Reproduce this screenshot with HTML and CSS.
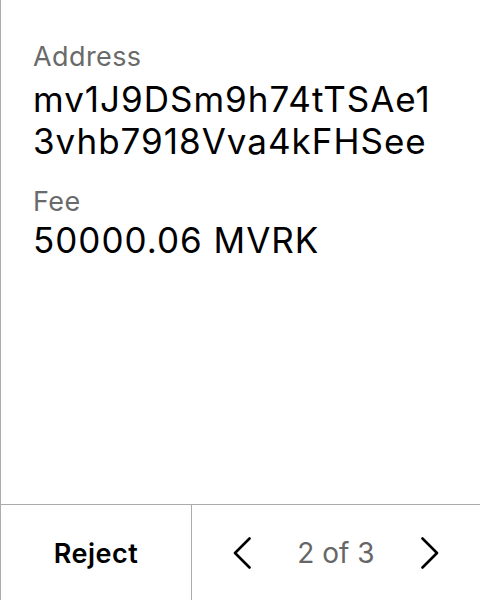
FILE: index.html
```html
<!DOCTYPE html>
<html>
<head>
<meta charset="utf-8">
<link rel="stylesheet" href="styles.css">
</head>
<body>
<div class="screen">
  <div class="content">
    <div class="field">
      <div class="label">Address</div>
      <div class="value">mv1J9DSm9h74tTSAe1<br>3vhb7918Vva4kFHSee</div>
    </div>
    <div class="field field-fee">
      <div class="label">Fee</div>
      <div class="value">50000.06 MVRK</div>
    </div>
  </div>
  <div class="footer">
    <div class="reject">Reject</div>
    <div class="pager">
      <svg class="chev" width="18" height="32" viewBox="0 0 18 32"><path d="M16.5 1.5 L2 16 L16.5 30.5" fill="none" stroke="#000" stroke-width="2.6" stroke-linecap="round" stroke-linejoin="round"/></svg>
      <span class="count">2 of 3</span>
      <svg class="chev" width="18" height="32" viewBox="0 0 18 32"><path d="M1.5 1.5 L16 16 L1.5 30.5" fill="none" stroke="#000" stroke-width="2.6" stroke-linecap="round" stroke-linejoin="round"/></svg>
    </div>
  </div>
</div>
</body>
</html>
```
FILE: styles.css
```css
html, body {
  margin: 0;
  padding: 0;
  background: #fff;
}
body {
  font-family: Inter, "Noto Sans", sans-serif;
  color: #000;
}
.screen {
  width: 479px;
  height: 600px;
  border-left: 1px solid #ababab;
  display: flex;
  flex-direction: column;
}
.content {
  flex: 1;
  padding: 41px 0 0 32px;
}
.label {
  font-size: 27px;
  line-height: 32px;
  letter-spacing: 0.4px;
  color: #6a6a6a;
}
.value {
  font-size: 35px;
  line-height: 42px;
  margin-top: 5px;
  letter-spacing: 1px;
}
.field-fee {
  margin-top: 24px;
}
.field-fee .value {
  margin-top: 1px;
}
.footer {
  height: 95px;
  border-top: 1px solid #ababab;
  display: grid;
  grid-template-columns: 191px 1fr;
}
.reject {
  border-right: 1px solid #ababab;
  display: flex;
  align-items: center;
  justify-content: center;
  font-size: 27px;
  font-weight: 600;
  letter-spacing: 0.5px;
  padding-top: 2px;
}
.pager {
  display: flex;
  align-items: center;
  justify-content: space-between;
  padding: 0 41px;
}
.count {
  font-size: 28px;
  color: #666;
}
```
